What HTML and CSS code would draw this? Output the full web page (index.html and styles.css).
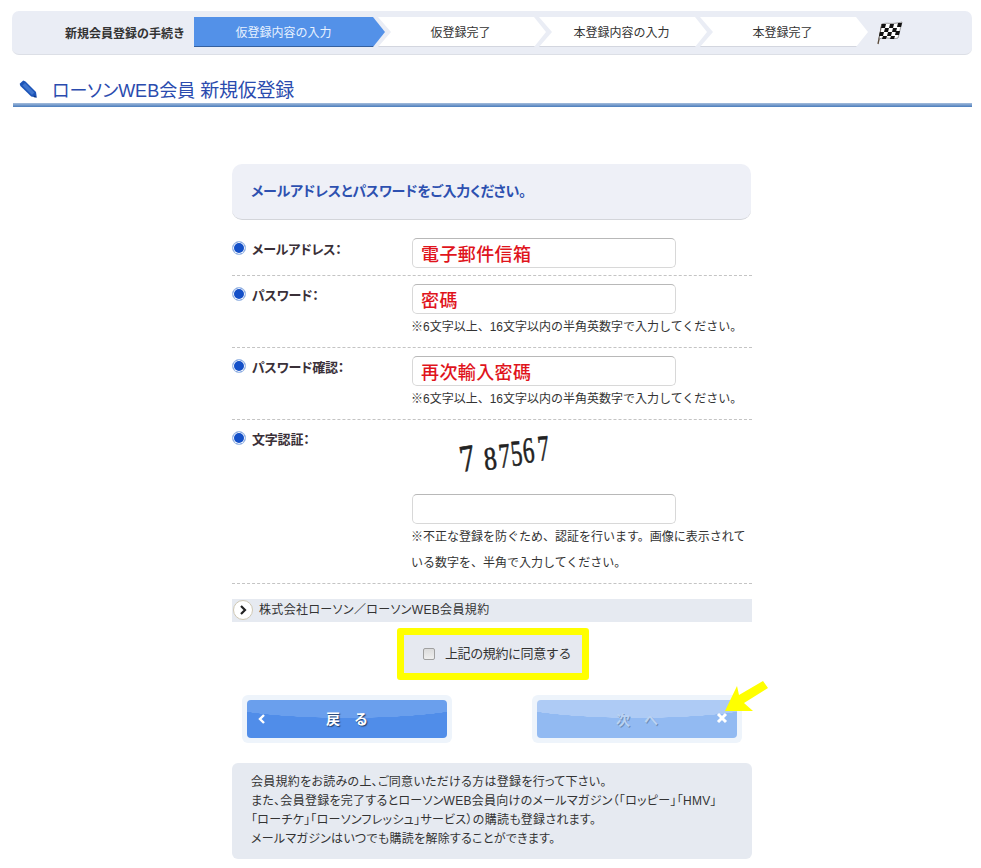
FILE: index.html
```html
<!DOCTYPE html>
<html lang="ja">
<head>
<meta charset="utf-8">
<title>ローソンWEB会員 新規仮登録</title>
<link rel="stylesheet" href="styles.css">
</head>
<body>
<div class="page">
  <nav class="steps">
    <div class="steps-label">新規会員登録の手続き</div>
    <ol class="step-list">
      <li class="step step-active">仮登録内容の入力</li>
      <li class="step">仮登録完了</li>
      <li class="step">本登録内容の入力</li>
      <li class="step">本登録完了</li>
    </ol>
    <svg class="flag" width="26" height="24" viewBox="0 0 26 24">
      <path d="M5 3 L1 23" stroke="#5a4a3a" stroke-width="1.3" fill="none"/>
      <path d="M5 3 C10 1 14 4 25 1 L21 17 C14 19 9 15 2 18 Z" fill="#fff" stroke="#444" stroke-width=".5"/>
      <path d="M5 3h4l-1 4H4z M13 3h4l-1 4h-4z M21 2h4l-1 4h-4z M8 7h4l-1 4H7z M16 7h4l-1 4h-4z M3 11h4l-1 4H2z M11 11h4l-1 4h-4z M19 10h4l-1 4h-4z M6 15h4l-1 3H5z M14 15h4l-1 3h-4z" fill="#111"/>
    </svg>
  </nav>

  <h1 class="title">
    <svg class="pencil" width="18" height="18" viewBox="0 0 18 18">
      <path d="M4.2 0.6 L6.5 1.4 L17 12 L17.8 17.6 L12.2 16.6 L1.4 6 L0.7 3.7 Z" fill="#1c54b8"/>
      <path d="M3.4 5.6 L6 3 L15.4 12.6 L13 15 Z" fill="#3f74cc"/>
      <path d="M15.6 15.4 L17.8 17.6 L14.8 17.2 Z" fill="#0f2f70"/>
    </svg>
    <span>ローソンWEB会員 <span class="title-sub">新規仮登録</span></span>
  </h1>

  <main class="form">
    <div class="lead">メールアドレスとパスワードをご入力ください。</div>

    <div class="row row-first">
      <div class="row-label"><span class="bullet"></span>メールアドレス：</div>
      <div class="row-body"><div class="field">電子郵件信箱</div></div>
    </div>
    <div class="row">
      <div class="row-label"><span class="bullet"></span>パスワード：</div>
      <div class="row-body">
        <div class="field">密碼</div>
        <p class="hint">※6文字以上、16文字以内の半角英数字で入力してください。</p>
      </div>
    </div>
    <div class="row">
      <div class="row-label"><span class="bullet"></span>パスワード確認：</div>
      <div class="row-body">
        <div class="field">再次輸入密碼</div>
        <p class="hint">※6文字以上、16文字以内の半角英数字で入力してください。</p>
      </div>
    </div>
    <div class="row">
      <div class="row-label"><span class="bullet"></span>文字認証：</div>
      <div class="row-body">
        <svg class="captcha" width="264" height="66" viewBox="0 0 264 66">
          <text class="cg" transform="translate(50 44) rotate(-10) scale(1.05 1.3)" font-size="29">7</text>
          <text class="cg" transform="translate(73 42) rotate(-6) scale(.95 1.2)" font-size="27">8</text>
          <text class="cg" transform="translate(88 40) rotate(-6) scale(.85 1.3)" font-size="27">7</text>
          <text class="cg" transform="translate(100 38) rotate(-6) scale(.85 1.35)" font-size="27">5</text>
          <text class="cg" transform="translate(112 35) rotate(-6) scale(.85 1.35)" font-size="27">6</text>
          <text class="cg" transform="translate(127 33) rotate(-6) scale(.85 1.35)" font-size="27">7</text>
        </svg>
        <div class="field"></div>
        <p class="hint">※不正な登録を防ぐため、認証を行います。画像に表示されている数字を、半角で入力してください。</p>
      </div>
    </div>

    <div class="terms">
      <span class="terms-icon"><svg width="10" height="10" viewBox="0 0 10 10"><path d="M3 1 L7 5 L3 9" fill="none" stroke="#222" stroke-width="2.2"/></svg></span>
      株式会社ローソン／ローソンWEB会員規約
    </div>

    <label class="agree"><input class="agree-box" type="checkbox">上記の規約に同意する</label>

    <div class="actions">
      <div class="btn-frame">
        <button class="btn" type="button">
          <svg class="btn-icon" width="10" height="10" viewBox="0 0 10 10"><path d="M7 1 L3 5 L7 9" fill="none" stroke="#fff" stroke-width="2.4"/></svg>
          <span class="btn-text">戻　る</span>
        </button>
      </div>
      <div class="btn-frame">
        <button class="btn btn-off" type="button">
          <span class="btn-text">次　へ</span>
          <svg class="btn-icon btn-x" width="12" height="12" viewBox="0 0 12 12"><path d="M2 2 L10 10 M10 2 L2 10" fill="none" stroke="#fff" stroke-width="3"/></svg>
        </button>
      </div>
      <svg class="pointer" width="50" height="36" viewBox="0 0 50 36"><path d="M5 33 L17 8 L19 17 L43 3 L48 10 L24 25 L33 33 Z" fill="#ffff00"/></svg>
    </div>

    <div class="note">
      会員規約をお読みの上、ご同意いただける方は登録を行って下さい。<br>
      また、会員登録を完了するとローソンWEB会員向けのメールマガジン（「ロッピー」「HMV」<br>
      「ローチケ」「ローソンフレッシュ」サービス）の購読も登録されます。<br>
      メールマガジンはいつでも購読を解除することができます。
    </div>
  </main>
</div>
</body>
</html>
```

FILE: styles.css
```css
* { box-sizing: border-box; }
html, body { margin: 0; padding: 0; background: #fff; }
body {
  font-family: "Liberation Sans", "Noto Sans CJK JP", sans-serif;
  font-size: 12px;
  color: #333;
  font-feature-settings: "palt";
}
.page { width: 960px; margin-left: 12px; padding-top: 11px; }

/* steps */
.steps {
  display: flex;
  align-items: center;
  height: 44px;
  background: #eaedf5;
  border-bottom: 1px solid #dcdfe6;
  border-radius: 7px;
  padding-bottom: 1px;
}
.steps-label {
  width: 173px;
  text-align: right;
  font-weight: 700;
  font-size: 12px;
  color: #333;
  font-feature-settings: normal;
}
.step-list {
  display: flex;
  list-style: none;
  margin: 0 0 0 9px;
  padding: 0;
}
.step {
  width: 168px;
  height: 30px;
  margin-right: -7px;
  padding: 0 16px 2px 13px;
  display: flex;
  align-items: center;
  justify-content: center;
  font-size: 12px;
  color: #333;
  background: linear-gradient(#fff 29px, #d3d6df 0);
  font-feature-settings: normal;
  clip-path: polygon(0 0, 156px 0, 100% 50%, 156px 100%, 0 100%, 13px 50%);
}
.step-active {
  width: 191px;
  padding: 0 12px 2px 0;
  color: #e8f1ff;
  margin-right: -7px;
  background: linear-gradient(#5391e8 29px, #34609f 0);
  clip-path: polygon(0 0, 179px 0, 100% 50%, 179px 100%, 0 100%);
}
.flag { margin-left: 16px; margin-top: 1px; }

/* heading */
.title {
  display: flex;
  align-items: center;
  margin: 20px 0 0 1px;
  height: 32px;
  padding: 0 0 5px 6px;
  font-size: 18px;
  font-weight: 400;
  color: #2a4bae;
  background: linear-gradient(#a5bddc, #4a7cbc) bottom / 100% 4px no-repeat;
}
.title-sub { font-size: 19px; letter-spacing: -.2px; }
.pencil { margin-right: 15px; flex: none; }

/* form column */
.form { width: 520px; margin: 57px auto 0; }
.lead {
  height: 56px;
  width: 519px;
  padding: 0 0 4px 19px;
  display: flex;
  align-items: center;
  font-size: 14px;
  font-weight: 700;
  letter-spacing: -.2px;
  color: #2d50b0;
  background: #eef0f7;
  border-bottom: 1px solid #d3d5da;
  border-radius: 10px;
}
.row {
  display: grid;
  grid-template-columns: 180px 1fr;
  padding: 8px 0 7px;
  border-bottom: 1px dashed #c4c4c4;
}
.row-first { margin-top: 10px; }
.row-label {
  display: flex;
  align-items: center;
  height: 18px;
  margin-top: 1px;
  font-size: 13px;
  font-weight: 700;
  letter-spacing: -.2px;
  color: #3a3038;
}
.bullet {
  width: 14px;
  height: 14px;
  margin-right: 6px;
  border-radius: 50%;
  background: #1450c8;
  border: 1px solid #a9c3e8;
  box-shadow: inset 0 0 0 1px #fff;
}
.field {
  width: 264px;
  height: 30px;
  padding-left: 8px;
  display: flex;
  align-items: center;
  font-family: "Noto Sans CJK TC", sans-serif;
  font-size: 18px;
  font-weight: 500;
  letter-spacing: .4px;
  line-height: 1;
  color: #e0141c;
  background: #fff;
  border: 1px solid #d8d8d8;
  border-top-color: #b8b8b8;
  border-radius: 5px;
  font-feature-settings: normal;
}
.hint {
  margin: 0 0 0 -1px;
  font-size: 12px;
  line-height: 26px;
  color: #333;
  font-feature-settings: normal;
}
.captcha { display: block; }
.cg { font-family: "Liberation Serif", serif; fill: #222; stroke: #222; stroke-width: .45; }

/* terms */
.terms {
  display: flex;
  align-items: center;
  height: 23px;
  margin-top: 15px;
  padding: 0 0 4px 1px;
  background: #e6eaf1;
  font-size: 12px;
  letter-spacing: .35px;
  color: #333;
}
.terms-icon {
  width: 20px;
  height: 20px;
  margin-right: 6px;
  margin-top: 3px;
  display: flex;
  align-items: center;
  justify-content: center;
  background: #fff;
  border: 1px solid #cfc8b4;
  border-radius: 50%;
}
.agree {
  display: flex;
  align-items: center;
  width: 192px;
  height: 52px;
  margin: 6px 0 0 165px;
  padding: 0 0 3px 19px;
  background: #e6e9f0;
  border: 7px solid #ffff00;
  border-radius: 3px;
  font-size: 13px;
  letter-spacing: -.4px;
  color: #333;
  font-feature-settings: normal;
}
.agree-box {
  appearance: none;
  width: 12px;
  height: 12px;
  margin: 3px 10px 0 0;
  background: linear-gradient(#dcdcdc, #efefef);
  border: 1px solid #a0a0a0;
  border-radius: 2px;
}

/* buttons */
.actions {
  position: relative;
  display: flex;
  justify-content: space-between;
  margin-top: 15px;
  padding: 0 10px;
}
.btn-frame {
  width: 210px;
  height: 48px;
  padding: 5px;
  background: #eef4fb;
  border-radius: 6px;
}
.btn {
  display: flex;
  align-items: center;
  position: relative;
  width: 100%;
  height: 100%;
  padding: 0 0 3px;
  border: 0;
  border-radius: 4px;
  background:
    radial-gradient(ellipse 134px 18px at 50% 0, #6a9fed 0 99%, transparent 100%),
    #508de9;
  font-family: inherit;
}
.btn-off {
  padding-bottom: 1px;
  background:
    radial-gradient(ellipse 134px 18px at 50% 0, #aecbf5 0 99%, transparent 100%),
    #92baf2;
}
.btn-text {
  flex: 1;
  text-align: center;
  font-size: 14px;
  font-weight: 700;
  color: #fff;
  text-shadow: 1px 1px 1px #22406f;
  font-feature-settings: normal;
}
.btn-off .btn-text {
  color: #b9d2f3;
  text-shadow: 1px 1px 0 #6f8fb8;
}
.btn-icon { position: absolute; left: 10px; top: 14px; }
.btn-x { left: auto; right: 9px; top: 12px; }
.pointer { position: absolute; left: 488px; top: -17px; }

/* note */
.note {
  height: 96px;
  margin-top: 20px;
  padding: 10px 0 10px 19px;
  background: #e6eaf1;
  border-radius: 6px;
  font-size: 12px;
  line-height: 19px;
  color: #333;
  letter-spacing: .28px;
  white-space: nowrap;
}
```
